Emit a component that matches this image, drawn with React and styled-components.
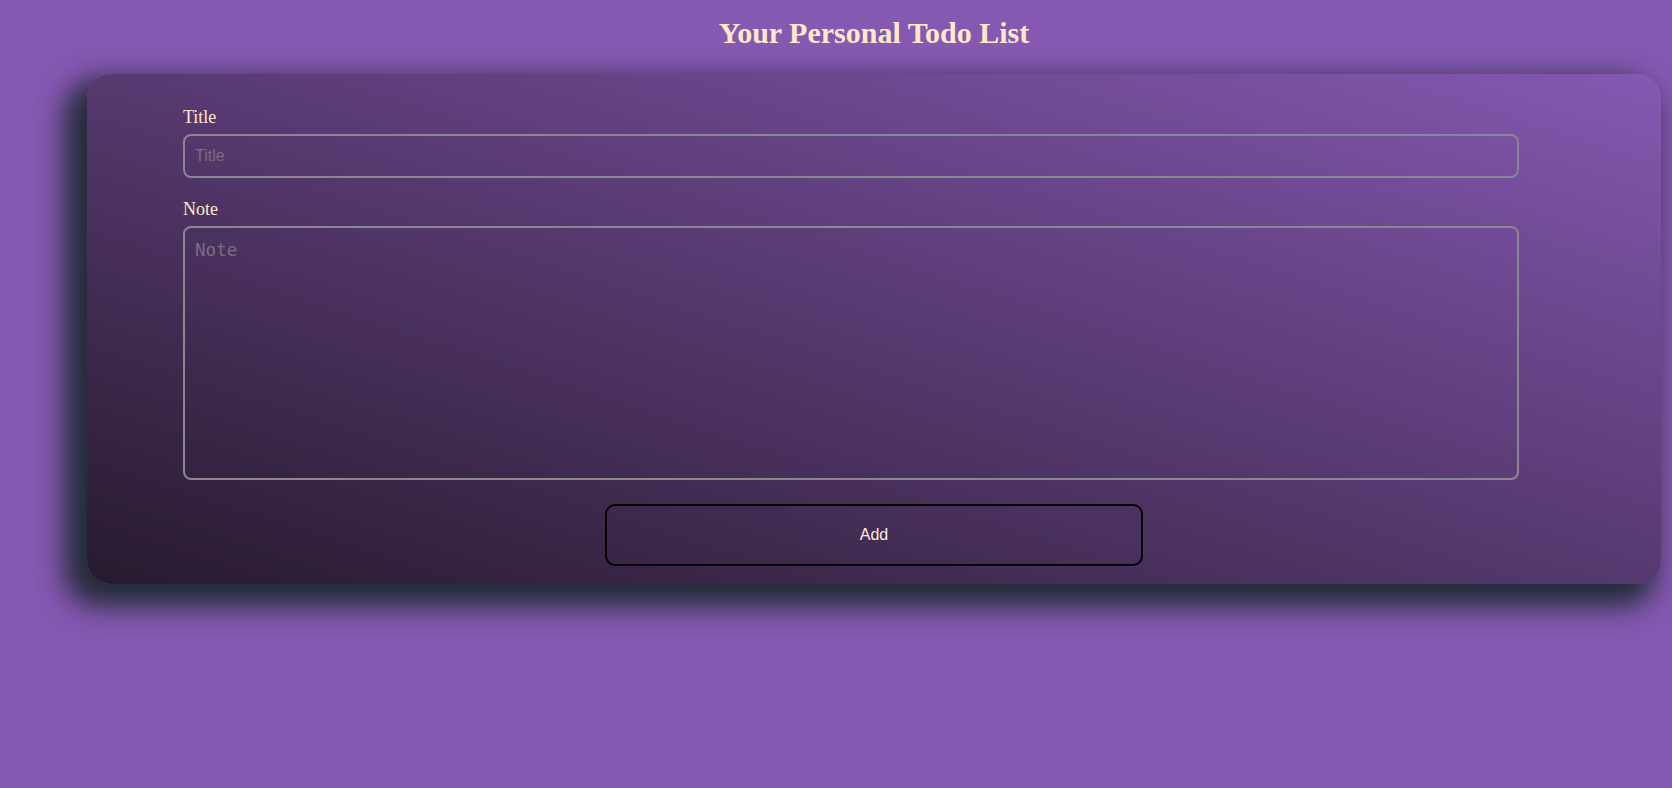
import React from "react";
import styled, { createGlobalStyle } from "styled-components";

const GlobalStyle = createGlobalStyle`
  html, body {
    margin: 0;
    background: #8558b2;
  }
  body {
    font-family: "Liberation Serif", "Times New Roman", serif;
    min-height: 788px;
  }
`;

const Page = styled.div`
  padding: 0 0 40px 87px;
`;

const Column = styled.div`
  width: 1574px;
`;

const Heading = styled.h1`
  margin: 0;
  padding: 15px 0 23px;
  line-height: 36px;
  font-size: 30px;
  font-weight: bold;
  text-align: center;
  color: #ffe8c8;
`;

const Card = styled.form`
  box-sizing: border-box;
  padding: 33px 142px 18px 96px;
  border-radius: 24px;
  background: linear-gradient(to top right, #271a2d, #8558b2);
  box-shadow: -14px 14px 28px 8px rgba(30, 42, 50, 0.97);
  display: flex;
  flex-direction: column;
`;

const Label = styled.label`
  font-size: 18px;
  color: #ffe8c8;
  line-height: 21px;
  margin-bottom: ${(p) => p.$gap}px;
`;

const Field = styled.input`
  box-sizing: border-box;
  height: 44px;
  width: 100%;
  padding: 0 10px;
  background: transparent;
  border: 2px solid #8a8790;
  border-radius: 8px;
  font-family: "Liberation Sans", Arial, sans-serif;
  font-size: 16px;
  color: #ffe8c8;
  margin-bottom: 21px;
  outline: none;
  &::placeholder {
    color: #77707e;
  }
`;

const Area = styled.textarea`
  box-sizing: border-box;
  height: 254px;
  width: 100%;
  padding: 12px 10px 8px;
  background: transparent;
  border: 2px solid #8a8790;
  border-radius: 8px;
  font-family: "DejaVu Sans Mono", monospace;
  font-size: 17.6px;
  color: #ffe8c8;
  resize: none;
  outline: none;
  &::placeholder {
    color: #77707e;
  }
`;

const ButtonRow = styled.div`
  display: flex;
  justify-content: center;
  margin: 24px -142px 0 -96px;
`;

const AddButton = styled.button`
  width: 538px;
  height: 62px;
  background: transparent;
  border: 2px solid #000;
  border-radius: 10px;
  font-family: "Liberation Sans", Arial, sans-serif;
  font-size: 16px;
  color: #ffeedd;
  cursor: pointer;
`;

function App() {
  return (
    <>
      <GlobalStyle />
      <Page>
        <Column>
          <Heading>Your Personal Todo List</Heading>
          <Card onSubmit={(e) => e.preventDefault()}>
            <Label htmlFor="title" $gap={6}>Title</Label>
            <Field id="title" placeholder="Title" />
            <Label htmlFor="note" $gap={6}>Note</Label>
            <Area id="note" placeholder="Note" />
            <ButtonRow>
              <AddButton type="submit">Add</AddButton>
            </ButtonRow>
          </Card>
        </Column>
      </Page>
    </>
  );
}

export default App;
